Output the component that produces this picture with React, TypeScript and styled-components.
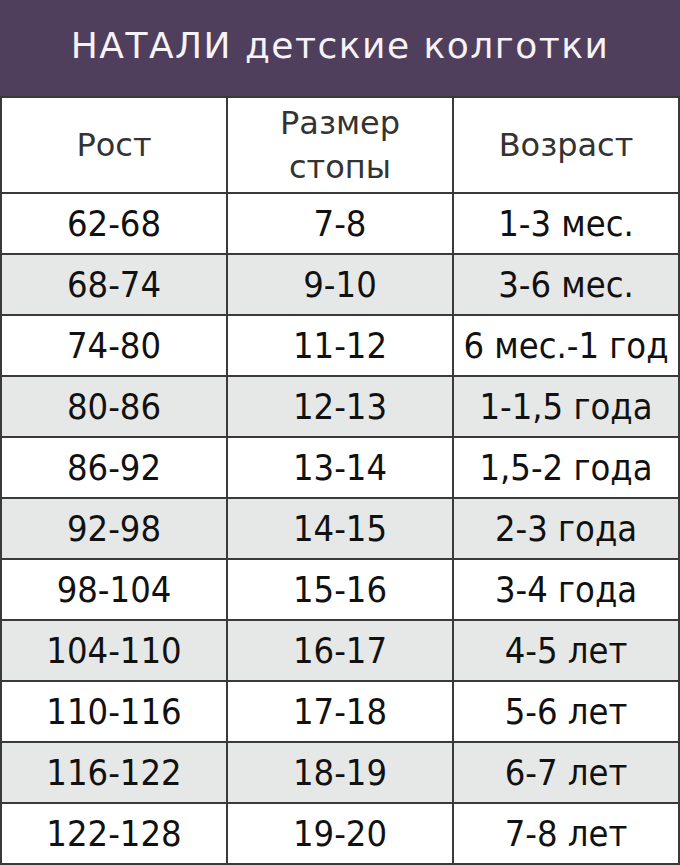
import React from 'react';
import styled, { createGlobalStyle } from 'styled-components';

interface SizeRow {
  height: string;
  foot: string;
  age: string;
}

const rows: SizeRow[] = [
  { height: '62-68', foot: '7-8', age: '1-3 мес.' },
  { height: '68-74', foot: '9-10', age: '3-6 мес.' },
  { height: '74-80', foot: '11-12', age: '6 мес.-1 год' },
  { height: '80-86', foot: '12-13', age: '1-1,5 года' },
  { height: '86-92', foot: '13-14', age: '1,5-2 года' },
  { height: '92-98', foot: '14-15', age: '2-3 года' },
  { height: '98-104', foot: '15-16', age: '3-4 года' },
  { height: '104-110', foot: '16-17', age: '4-5 лет' },
  { height: '110-116', foot: '17-18', age: '5-6 лет' },
  { height: '116-122', foot: '18-19', age: '6-7 лет' },
  { height: '122-128', foot: '19-20', age: '7-8 лет' },
];

const GlobalStyle = createGlobalStyle`
  html, body {
    margin: 0;
    padding: 0;
    background: #ffffff;
  }
`;

const App: React.FC = () => {
  return (
    <>
      <GlobalStyle />
      <Table>
        <Title>НАТАЛИ детские колготки</Title>

        <HeadCell>Рост</HeadCell>
        <HeadCell>
          Размер
          <br />
          стопы
        </HeadCell>
        <HeadCell>Возраст</HeadCell>

        {rows.map((row, i) => (
          <React.Fragment key={row.height}>
            <Cell $striped={i % 2 === 1}>{row.height}</Cell>
            <Cell $striped={i % 2 === 1}>{row.foot}</Cell>
            <Cell $striped={i % 2 === 1}>{row.age}</Cell>
          </React.Fragment>
        ))}
      </Table>
    </>
  );
};

const Table = styled.div`
  width: 680px;
  height: 865px;
  box-sizing: border-box;
  display: grid;
  grid-template-columns: repeat(3, 1fr);
  grid-template-rows: 96px 94px repeat(11, 59px);
  gap: 2px;
  padding: 0 2px 2px 2px;
  background-color: #3a3a3a;
`;

const Title = styled.div`
  grid-column: 1 / -1;
  margin: 0 -2px;
  display: flex;
  align-items: center;
  justify-content: center;
  padding-bottom: 6px;
  background-color: #4f3e5c;
  color: #f6f2f7;
  font-family: 'DejaVu Sans', 'Liberation Sans', sans-serif;
  font-size: 36px;
  letter-spacing: 1.5px;
  white-space: nowrap;
`;

const HeadCell = styled.div`
  display: flex;
  align-items: center;
  justify-content: center;
  text-align: center;
  background-color: #ffffff;
  color: #333333;
  font-family: 'DejaVu Sans', 'Liberation Sans', sans-serif;
  font-size: 32px;
  line-height: 44px;
`;

const Cell = styled.div<{ $striped?: boolean }>`
  display: flex;
  align-items: center;
  justify-content: center;
  background-color: ${props => (props.$striped ? '#e6e7e7' : '#ffffff')};
  color: #111111;
  font-family: 'DejaVu Sans Condensed', 'DejaVu Sans', sans-serif;
  font-stretch: condensed;
  font-size: 36px;
  white-space: nowrap;
`;

export default App;
